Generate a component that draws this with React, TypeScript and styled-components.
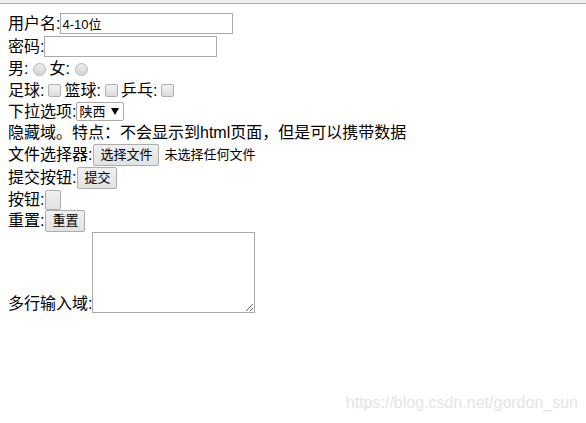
import styled, {createGlobalStyle} from 'styled-components'

const GlobalStyle = createGlobalStyle`
  html, body {
    margin: 0;
    padding: 0;
    background: #ffffff;
  }
  body {
    font-family: "Liberation Sans", "Noto Sans CJK SC", sans-serif;
    font-size: 16px;
    color: #000;
  }
`

const Page = styled.div`
  position: relative;
  width: 586px;
  height: 423px;
  overflow: hidden;
`

const TopStrip = styled.div`
  height: 3px;
  background: #f0f0f0;
  border-bottom: 1px solid #a8a8a8;
`

const Form = styled.form`
  display: flex;
  flex-direction: column;
  padding: 8px 8px 0 8px;
`

const Row = styled.div<{ $h: number; $end?: boolean }>`
  display: flex;
  align-items: ${p => (p.$end ? 'flex-end' : 'center')};
  height: ${p => p.$h}px;
  line-height: 18px;
  white-space: nowrap;
`

const Label = styled.span`
  font-size: 16px;
`

const TextInput = styled.input`
  box-sizing: border-box;
  width: 173px;
  height: 21px;
  border: 1px solid #a9a9a9;
  padding: 0 1px;
  margin: 0;
  font-family: "Liberation Sans", "Noto Sans CJK SC", sans-serif;
  font-size: 13px;
  color: #000;
  outline: none;
`

const Radio = styled.input`
  appearance: none;
  box-sizing: border-box;
  width: 13px;
  height: 13px;
  margin: 0 3px 0 5px;
  border: 1px solid #b5b5b5;
  border-radius: 50%;
  background: linear-gradient(#ececec, #d6d6d6);
`

const Check = styled.input`
  appearance: none;
  box-sizing: border-box;
  width: 13px;
  height: 13px;
  margin: 0 3px 0 4px;
  border: 1px solid #b0b0b0;
  border-radius: 2px;
  background: linear-gradient(#f2f2f2, #dcdcdc);
`

const SelectBox = styled.div`
  box-sizing: border-box;
  display: flex;
  align-items: center;
  gap: 6px;
  height: 19px;
  padding: 0 4px 0 2px;
  border: 1px solid #a9a9a9;
  border-radius: 2px;
  font-size: 13px;
`

const Button = styled.button<{ $w?: number; $h?: number }>`
  box-sizing: border-box;
  width: ${p => (p.$w ? `${p.$w}px` : 'auto')};
  height: ${p => p.$h ?? 22}px;
  margin: 0 0 0 1px;
  padding: 0 6px;
  border: 1px solid #acacac;
  border-radius: 2px;
  background: linear-gradient(#f0f0f0, #e2e2e2);
  font-family: "Liberation Sans", "Noto Sans CJK SC", sans-serif;
  font-size: 13px;
  color: #000;
  line-height: 18px;
`

const FileHint = styled.span`
  font-size: 13px;
  margin-left: 5px;
`

const TextArea = styled.textarea`
  box-sizing: border-box;
  width: 163px;
  height: 81px;
  margin: 0;
  border: 1px solid #a9a9a9;
  resize: both;
  outline: none;
`

const Watermark = styled.div`
  position: absolute;
  right: 8px;
  bottom: 11px;
  font-family: "Liberation Sans", sans-serif;
  font-size: 16px;
  color: #e4e4e4;
`

const Arrow = () => (
  <svg width="8" height="7" viewBox="0 0 8 7">
    <path d="M0 0 L8 0 L4 7 Z" fill="#000" />
  </svg>
)

export default function App() {
  return (
    <Page>
      <GlobalStyle />
      <TopStrip />
      <Form onSubmit={e => e.preventDefault()}>
        <Row $h={23}>
          <Label>用户名:</Label>
          <TextInput type="text" defaultValue="4-10位" />
        </Row>
        <Row $h={23}>
          <Label>密码:</Label>
          <TextInput type="password" />
        </Row>
        <Row $h={22}>
          <Label>男:</Label>
          <Radio type="radio" name="sex" />
          <Label>女:</Label>
          <Radio type="radio" name="sex" />
        </Row>
        <Row $h={21}>
          <Label>足球:</Label>
          <Check type="checkbox" />
          <Label>篮球:</Label>
          <Check type="checkbox" />
          <Label>乒乓:</Label>
          <Check type="checkbox" />
        </Row>
        <Row $h={21}>
          <Label>下拉选项:</Label>
          <SelectBox>
            陕西
            <Arrow />
          </SelectBox>
        </Row>
        <Row $h={21}>
          <Label>隐藏域。特点：不会显示到html页面，但是可以携带数据</Label>
        </Row>
        <Row $h={23}>
          <Label>文件选择器:</Label>
          <Button type="button">选择文件</Button>
          <FileHint>未选择任何文件</FileHint>
        </Row>
        <Row $h={23}>
          <Label>提交按钮:</Label>
          <Button type="submit">提交</Button>
        </Row>
        <Row $h={21}>
          <Label>按钮:</Label>
          <Button type="button" $w={16} $h={20} />
        </Row>
        <Row $h={22}>
          <Label>重置:</Label>
          <Button type="reset">重置</Button>
        </Row>
        <Row $h={81} $end>
          <Label>多行输入域:</Label>
          <TextArea />
        </Row>
      </Form>
      <Watermark>https://blog.csdn.net/gordon_sun</Watermark>
    </Page>
  )
}
